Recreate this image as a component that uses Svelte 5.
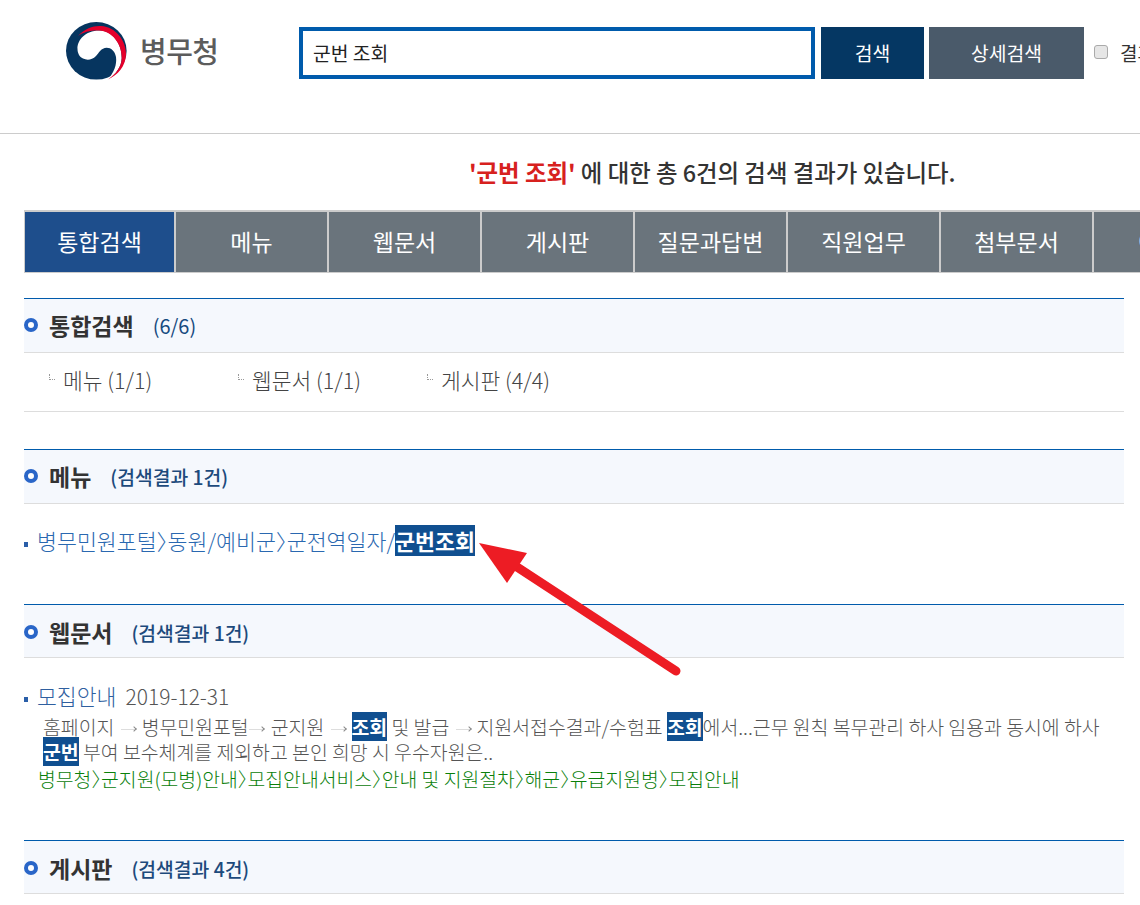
<script lang="ts">
	const tabs = ['통합검색', '메뉴', '웹문서', '게시판', '질문과답변', '직원업무', '첨부문서', '이미지'];
	const summary = ['메뉴 (1/1)', '웹문서 (1/1)', '게시판 (4/4)'];
</script>

{#snippet sectionHead(title, note, noteClass = '')}
	<h2 class="sec-head">
		<span class="ring"></span>
		<span class="sec-title">{title}</span>
		<span class="sec-note {noteClass}">{note}</span>
	</h2>
{/snippet}

{#snippet gt()}<span class="gt">〉</span>{/snippet}

<div class="page">
	<header class="top">
		<div class="logo">
			<svg width="61" height="58" viewBox="0 0 61 58">
				<ellipse cx="30.300" cy="28.800" rx="30.300" ry="28.800" fill="#06355f" />
				<path d="M11.500 27 C11 18 20 8 34 8.500 C47 9 56 22 55.700 36 C55.500 45 50 52 42 57.500 C48 50 51 43 50 35 C49 29 45 25.700 40.700 25.700 C35 25.700 33 31 30 34 C26 38 21 38.500 17 36.500 C13.500 35 11.500 31 11.500 27 Z" fill="#fff" />
				<path d="M12 14 C19 6 28 3.500 35 4 C50 5 60.500 19 60 33 C59.500 44 52 53 42 57.500 C50 52 55.500 45 55.700 36 C56 22 46 9 33 8.500 C25 8.200 17 10 12 14 Z" fill="#e4002b" />
			</svg>
			<span class="logo-text">병무청</span>
		</div>
		<div class="search">
			<input class="q" type="text" value="군번 조회" />
			<button class="btn btn-go">검색</button>
			<button class="btn btn-detail">상세검색</button>
			<label class="within"><input type="checkbox" /><span>결과내 재검색</span></label>
		</div>
	</header>

	<p class="msg"><b>'군번 조회'</b> 에 대한 총 6건의 검색 결과가 있습니다.</p>

	<nav class="tabs">
		{#each tabs as t, i}
			<a class="tab" class:on={i === 0} href="#top">{t}</a>
		{/each}
	</nav>

	<section class="sec sec-all">
		{@render sectionHead('통합검색', '(6/6)', 'count')}
		<ul class="summary">
			{#each summary as s}
				<li><span class="elbow"></span>{s}</li>
			{/each}
		</ul>
	</section>

	<section class="sec sec-menu">
		{@render sectionHead('메뉴', '(검색결과 1건)')}
		<p class="crumb-line"><span class="sq"></span>병무민원포털{@render gt()}동원/예비군{@render gt()}군전역일자/<mark class="big">군번조회</mark></p>
	</section>

	<section class="sec sec-web">
		{@render sectionHead('웹문서', '(검색결과 1건)')}
		<div class="doc">
			<p class="doc-title"><span class="sq"></span>모집안내<span class="date">2019-12-31</span></p>
			<p class="doc-body">홈페이지 <i class="arr"></i>병무민원포털<i class="arr tight"></i>군지원 <i class="arr"></i><mark>조회</mark> 및 발급 <i class="arr"></i>지원서접수결과/수험표 <mark>조회</mark>에서...근무 원칙 복무관리 하사 임용과 동시에 하사<br /><mark>군번</mark> 부여 보수체계를 제외하고 본인 희망 시 우수자원은..</p>
			<p class="doc-path">병무청{@render gt()}군지원(모병)안내{@render gt()}모집안내서비스{@render gt()}안내 및 지원절차{@render gt()}해군{@render gt()}유급지원병{@render gt()}모집안내</p>
		</div>
	</section>

	<section class="sec sec-board">
		{@render sectionHead('게시판', '(검색결과 4건)')}
	</section>

	<svg class="pointer" width="240" height="150" viewBox="0 0 240 150">
		<path d="M199 130 L40 26" stroke="#ed1c24" stroke-width="9" stroke-linecap="round" />
		<path d="M2 2 L50 12 L30 42 Z" fill="#ed1c24" />
	</svg>
</div>

<style>
	:global(body) {
		margin: 0;
		background: #fff;
		overflow: hidden;
	}

	.page {
		position: relative;
		width: 1140px;
		height: 905px;
		overflow: hidden;
		font-family: "Noto Sans CJK KR", "Noto Sans", sans-serif;
		color: #333;
	}

	.top {
		display: flex;
		height: 134px;
		box-sizing: border-box;
		border-bottom: 1px solid #ccc;
		padding: 22px 0 0 66px;
	}

	.logo {
		display: flex;
		align-items: flex-start;
		gap: 13px;
		width: 233px;
		flex: none;
	}

	.logo-text {
		font-size: 29px;
		line-height: 56px;
		font-weight: 500;
		color: #5c5c5c;
		letter-spacing: -0.5px;
	}

	.search {
		display: flex;
		gap: 5px;
		margin-top: 5px;
		height: 52px;
		flex: none;
	}

	.q {
		width: 516px;
		height: 52px;
		box-sizing: border-box;
		border: 4px solid #005bac;
		padding: 0 10px;
		font: 19.300px "Noto Sans CJK KR", sans-serif;
		color: #222;
		margin-right: 1px;
		outline: none;
	}

	.btn {
		border: 0;
		height: 52px;
		color: #fff;
		font: 19.300px "Noto Sans CJK KR", sans-serif;
		padding: 0;
	}

	.btn-go {
		width: 103px;
		background: #053763;
	}

	.btn-detail {
		width: 155px;
		background: #4a5a6a;
	}

	.within {
		display: flex;
		align-items: center;
		gap: 12px;
		margin-left: 5px;
		font-size: 19px;
		white-space: nowrap;
		height: 50px;
	}

	.within input {
		appearance: none;
		width: 14px;
		height: 14px;
		margin: 0;
		box-sizing: border-box;
		background: #e6e6e6;
		border: 1px solid #aaa;
		border-radius: 3px;
	}

	.msg {
		margin: 0;
		padding: 21px 0 0 469px;
		height: 76px;
		box-sizing: border-box;
		font-size: 23.400px;
		line-height: 34px;
		font-weight: 500;
		color: #333;
		white-space: nowrap;
	}

	.msg b {
		color: #d7211e;
		font-weight: 700;
	}

	.tabs {
		display: flex;
		margin-left: 24px;
		height: 63px;
		box-sizing: border-box;
		border-top: 2px solid #ccc;
		border-bottom: 1px solid #ccc;
		width: max-content;
	}

	.tab {
		width: 151px;
		flex: none;
		background: #6a747c;
		border-right: 2px solid #ccc;
		color: #fff;
		font-size: 23px;
		line-height: 58px;
		text-align: center;
		text-decoration: none;
	}

	.tab.on {
		background: #1e4e8c;
		border-left: 1px solid #ccc;
		width: 149px;
	}

	.sec {
		margin: 0 16px 0 24px;
	}

	.sec-head {
		display: flex;
		align-items: center;
		margin: 0;
		height: 55px;
		box-sizing: border-box;
		border-top: 1px solid #005bac;
		border-bottom: 1px solid #ddd;
		background: #f5f8fd;
		font-weight: 400;
	}

	.sec-web .sec-head,
	.sec-board .sec-head {
		height: 54px;
		padding-top: 3px;
	}

	.ring {
		width: 6px;
		height: 6px;
		border: 4px solid #2a66c8;
		border-radius: 50%;
		background: #fff;
		flex: none;
		margin-right: 11px;
		margin-top: -2px;
	}

	.sec-title {
		font-size: 23px;
		font-weight: 700;
		color: #333;
		margin-right: 19px;
		margin-top: -2px;
	}

	.sec-note {
		font-size: 19.300px;
		font-weight: 500;
		color: #1d4a7c;
	}

	.sec-note.count {
		font-size: 20px;
		font-weight: 400;
		color: #164a80;
		margin-top: -1px;
	}

	.sec-all {
		margin-top: 25px;
	}

	.summary {
		display: flex;
		margin: 0;
		padding: 0 0 5px 25px;
		height: 53px;
		list-style: none;
		border-bottom: 1px solid #ddd;
		font-size: 21.500px;
		color: #444;
		font-weight: 300;
	}

	.summary li {
		display: flex;
		align-items: center;
		gap: 8px;
		width: 189px;
		white-space: nowrap;
	}

	.elbow {
		width: 5px;
		height: 5px;
		border-left: 1px dotted #999;
		border-bottom: 1px dotted #999;
		margin-top: -6px;
	}

	.sec-menu {
		margin-top: 37px;
	}

	.sq {
		display: inline-block;
		width: 4px;
		height: 5px;
		background: #2a5ea8;
		margin-right: 9px;
		vertical-align: middle;
	}

	.gt {
		letter-spacing: -0.5em;
	}

	.crumb-line {
		margin: 0;
		height: 100px;
		padding-top: 20px;
		box-sizing: border-box;
		font-size: 21.700px;
		line-height: 34px;
		font-weight: 300;
		color: #2a68b0;
		white-space: nowrap;
	}

	mark {
		background: #104f90;
		color: #fff;
		font-weight: 700;
	}

	.doc {
		padding-top: 22px;
		height: 182px;
		box-sizing: border-box;
	}

	.doc-title {
		margin: 0;
		font-size: 21.600px;
		line-height: 32px;
		color: #2f5f9f;
		font-weight: 300;
		white-space: nowrap;
	}

	.date {
		margin-left: 9px;
		color: #555;
		font-size: 21px;
	}

	.doc-body {
		margin: 2px 0 0;
		padding-left: 19px;
		font-size: 19.400px;
		line-height: 25px;
		color: #555;
		font-weight: 300;
		white-space: nowrap;
	}

	.arr {
		display: inline-block;
		width: 14px;
		height: 1px;
		margin: 0 7px 0 2px;
		background: #ddd;
		vertical-align: middle;
		position: relative;
	}

	.arr.tight {
		margin-left: 0;
		margin-right: 8px;
	}

	.arr::after {
		content: '';
		position: absolute;
		right: -1px;
		top: -2px;
		width: 3px;
		height: 3px;
		border-top: 1px solid #888;
		border-right: 1px solid #888;
		transform: rotate(45deg);
	}

	.doc-body mark {
		line-height: 22px;
	}

	.doc-path {
		margin: 1px 0 0;
		padding-left: 14px;
		font-size: 19.350px;
		line-height: 28px;
		font-weight: 300;
		color: #0a800a;
		white-space: nowrap;
	}

	.pointer {
		position: absolute;
		left: 477px;
		top: 541px;
	}
</style>
